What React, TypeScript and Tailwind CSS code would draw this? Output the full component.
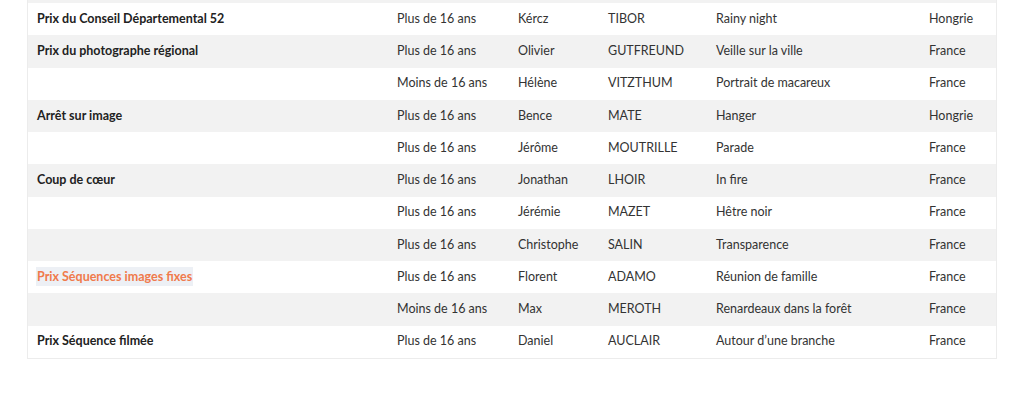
import React from "react";

type Row = { prize: string; cat: string; first: string; last: string; title: string; country: string; hl?: boolean };

const rows: Row[] = [
  { prize: "Prix du Conseil Départemental 52", cat: "Plus de 16 ans", first: "Kércz", last: "TIBOR", title: "Rainy night", country: "Hongrie" },
  { prize: "Prix du photographe régional", cat: "Plus de 16 ans", first: "Olivier", last: "GUTFREUND", title: "Veille sur la ville", country: "France" },
  { prize: "", cat: "Moins de 16 ans", first: "Hélène", last: "VITZTHUM", title: "Portrait de macareux", country: "France" },
  { prize: "Arrêt sur image", cat: "Plus de 16 ans", first: "Bence", last: "MATE", title: "Hanger", country: "Hongrie" },
  { prize: "", cat: "Plus de 16 ans", first: "Jérôme", last: "MOUTRILLE", title: "Parade", country: "France" },
  { prize: "Coup de cœur", cat: "Plus de 16 ans", first: "Jonathan", last: "LHOIR", title: "In fire", country: "France" },
  { prize: "", cat: "Plus de 16 ans", first: "Jérémie", last: "MAZET", title: "Hêtre noir", country: "France" },
  { prize: "", cat: "Plus de 16 ans", first: "Christophe", last: "SALIN", title: "Transparence", country: "France" },
  { prize: "Prix Séquences images fixes", cat: "Plus de 16 ans", first: "Florent", last: "ADAMO", title: "Réunion de famille", country: "France", hl: true },
  { prize: "", cat: "Moins de 16 ans", first: "Max", last: "MEROTH", title: "Renardeaux dans la forêt", country: "France" },
  { prize: "Prix Séquence filmée", cat: "Plus de 16 ans", first: "Daniel", last: "AUCLAIR", title: "Autour d’une branche", country: "France" },
];

export default function App() {
  return (
    <div className="w-[1024px] h-[402px] bg-white overflow-hidden" style={{ fontFamily: "Lato, 'Noto Sans', sans-serif" }}>
      <div className="ml-[27px] w-[970px] border-x border-b border-[#ececec] text-[12.5px] text-[#333]">
        <div className="h-[3px] bg-[#f2f2f2]" />
        {rows.map((r, i) => (
          <div key={i} className={`flex items-center h-[32.27px] ${i % 2 === 1 ? "bg-[#f2f2f2]" : "bg-white"}`}>
            <div className="w-[360px] pl-[9px] font-bold text-[#222]">
              {r.hl ? (
                <span className="bg-[#edf0f5] text-[#f07a4c] py-[2px] px-px -mx-px">{r.prize}</span>
              ) : (
                r.prize
              )}
            </div>
            <div className="w-[121px] pl-[9px]">{r.cat}</div>
            <div className="w-[90px] pl-[9px]">{r.first}</div>
            <div className="w-[108px] pl-[9px]">{r.last}</div>
            <div className="w-[213px] pl-[9px]">{r.title}</div>
            <div className="flex-1 pl-[9px]">{r.country}</div>
          </div>
        ))}
      </div>
    </div>
  );
}
